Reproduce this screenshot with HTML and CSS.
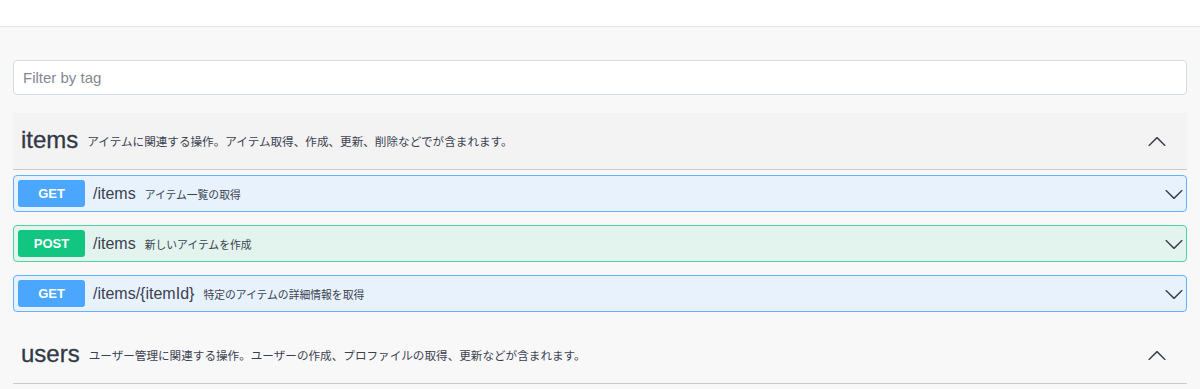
FILE: index.html
```html
<!DOCTYPE html>
<html>
<head>
    <meta charset="UTF-8">
    <link rel="stylesheet" href="styles.css">
</head>
<body>
    <div class="topbar"></div>

    <div class="wrapper">
        <div class="filter-container">
            <input class="filter-input" type="text" placeholder="Filter by tag">
        </div>

        <div class="tag-section">
            <div class="tag-header is-hover">
                <span class="tag-name">items</span>
                <span class="tag-desc">アイテムに関連する操作。アイテム取得、作成、更新、削除などでが含まれます。</span>
                <svg class="tag-arrow" width="20" height="20" viewBox="0 0 20 20"><path d="M17.418 14.891c.272.268.709.268.979 0s.271-.701 0-.969l-7.908-7.830c-.27-.268-.707-.268-.979 0l-7.908 7.830c-.27.268-.27.701 0 .969.271.268.709.268.979 0L10 7.75l7.418 7.141z"/></svg>
            </div>

            <div class="opblock opblock-get">
                <span class="method">GET</span>
                <span class="path">/items</span>
                <span class="summary">アイテム一覧の取得</span>
                <svg class="op-arrow" width="20" height="20" viewBox="0 0 20 20"><path d="M17.418 6.109c.272-.268.709-.268.979 0s.271.701 0 .969l-7.908 7.83c-.27.268-.707.268-.979 0l-7.908-7.83c-.27-.268-.27-.701 0-.969.271-.268.709-.268.979 0L10 13.25l7.418-7.141z"/></svg>
            </div>

            <div class="opblock opblock-post">
                <span class="method">POST</span>
                <span class="path">/items</span>
                <span class="summary">新しいアイテムを作成</span>
                <svg class="op-arrow" width="20" height="20" viewBox="0 0 20 20"><path d="M17.418 6.109c.272-.268.709-.268.979 0s.271.701 0 .969l-7.908 7.83c-.27.268-.707.268-.979 0l-7.908-7.83c-.27-.268-.27-.701 0-.969.271-.268.709-.268.979 0L10 13.25l7.418-7.141z"/></svg>
            </div>

            <div class="opblock opblock-get">
                <span class="method">GET</span>
                <span class="path">/items/{itemId}</span>
                <span class="summary">特定のアイテムの詳細情報を取得</span>
                <svg class="op-arrow" width="20" height="20" viewBox="0 0 20 20"><path d="M17.418 6.109c.272-.268.709-.268.979 0s.271.701 0 .969l-7.908 7.83c-.27.268-.707.268-.979 0l-7.908-7.83c-.27-.268-.27-.701 0-.969.271-.268.709-.268.979 0L10 13.25l7.418-7.141z"/></svg>
            </div>
        </div>

        <div class="tag-section">
            <div class="tag-header">
                <span class="tag-name">users</span>
                <span class="tag-desc">ユーザー管理に関連する操作。ユーザーの作成、プロファイルの取得、更新などが含まれます。</span>
                <svg class="tag-arrow" width="20" height="20" viewBox="0 0 20 20"><path d="M17.418 14.891c.272.268.709.268.979 0s.271-.701 0-.969l-7.908-7.830c-.27-.268-.707-.268-.979 0l-7.908 7.830c-.27.268-.27.701 0 .969.271.268.709.268.979 0L10 7.75l7.418 7.141z"/></svg>
            </div>
        </div>
    </div>
</body>
</html>
```

FILE: styles.css
```css
body {
    margin: 0;
    background-color: #f8f8f8;
    font-family: "Liberation Sans", "Noto Sans CJK JP", sans-serif;
    color: #3b4151;
}

.topbar {
    height: 26px;
    background-color: #ffffff;
    border-bottom: 1px solid #e2e3e6;
}

.wrapper {
    padding: 0 13px;
}

/* Filter */
.filter-container {
    padding-top: 33px;
    margin-bottom: 18px;
}

.filter-input {
    display: block;
    box-sizing: border-box;
    width: 100%;
    height: 35px;
    padding: 0 9px;
    border: 1px solid #d5dbe6;
    border-radius: 4px;
    background: #ffffff;
    font-family: "Liberation Sans", sans-serif;
    font-size: 15px;
    color: #3b4151;
    outline: none;
}

.filter-input::placeholder {
    color: #858993;
}

/* Tag header */
.tag-section {
    margin-bottom: 15px;
}

.tag-header {
    display: flex;
    align-items: center;
    height: 56px;
    padding: 0 20px 0 8px;
    border-bottom: 1px solid #c9cacd;
}

.tag-header.is-hover {
    background-color: #f3f3f3;
}

.tag-name {
    font-size: 24px;
    color: #333846;
    margin-right: 9px;
    padding-bottom: 2px;
    -webkit-text-stroke: 0.3px #333846;
}

.tag-desc {
    flex: 1;
    font-size: 11.6px;
    color: #3b4151;
    font-family: "Noto Sans CJK JP", sans-serif;
}

.tag-arrow {
    fill: #3b4151;
}

/* Operations */
.opblock {
    display: flex;
    align-items: center;
    box-sizing: border-box;
    height: 37px;
    margin-top: 13px;
    padding: 0 2px 0 4px;
    border: 1px solid;
    border-radius: 4px;
}

.tag-header + .opblock {
    margin-top: 5px;
}

.opblock-get {
    background-color: #e8f2fd;
    border-color: #66b1fe;
}

.opblock-post {
    background-color: #e2f4ed;
    border-color: #4fd3a0;
}

.method {
    width: 67px;
    height: 27px;
    line-height: 27px;
    text-align: center;
    border-radius: 3px;
    color: #ffffff;
    font-size: 13px;
    font-weight: 700;
}

.opblock-get .method {
    background-color: #4ba6fe;
}

.opblock-post .method {
    background-color: #12c580;
}

.path {
    margin-left: 8px;
    font-size: 16px;
    color: #3b4151;
}

.summary {
    flex: 1;
    margin-left: 9px;
    font-size: 10.8px;
    color: #3b4151;
    font-family: "Noto Sans CJK JP", sans-serif;
}

.op-arrow {
    fill: #3b4151;
}
```
